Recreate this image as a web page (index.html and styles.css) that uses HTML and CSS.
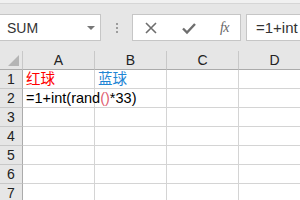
FILE: index.html
```html
<!DOCTYPE html>
<html>
<head>
<meta charset="utf-8">
<link rel="stylesheet" href="styles.css">
</head>
<body>
<div class="top-edge"></div>
<div class="fbar">
  <div class="namebox">
    <span class="nb-text">SUM</span>
    <span class="nb-arrow"></span>
  </div>
  <div class="sep"><span class="dot"></span><span class="dot"></span><span class="dot"></span></div>
  <div class="btns">
    <svg class="ico" width="14" height="14" viewBox="0 0 14 14"><path d="M2 2 L12 12 M12 2 L2 12" stroke="#6e6e6e" stroke-width="1.6" fill="none"/></svg>
    <svg class="ico" width="16" height="14" viewBox="0 0 16 14"><path d="M2 7.5 L6 11.5 L14 3" stroke="#6e6e6e" stroke-width="2.4" fill="none"/></svg>
    <span class="fx">fx</span>
  </div>
  <div class="finput">=1+int</div>
</div>
<div class="sheet">
  <div class="corner"><span class="tri"></span></div>
  <div class="ch">A</div><div class="ch">B</div><div class="ch">C</div><div class="ch">D</div>

  <div class="rh">1</div>
  <div class="cell red">红球</div><div class="cell blue">蓝球</div><div class="cell"></div><div class="cell"></div>

  <div class="rh">2</div>
  <div class="cell over">=1+int(rand<span class="p1">(</span><span class="p2">)</span>*33)</div><div class="cell"></div><div class="cell"></div><div class="cell"></div>

  <div class="rh">3</div>
  <div class="cell"></div><div class="cell"></div><div class="cell"></div><div class="cell"></div>
  <div class="rh">4</div>
  <div class="cell"></div><div class="cell"></div><div class="cell"></div><div class="cell"></div>
  <div class="rh">5</div>
  <div class="cell"></div><div class="cell"></div><div class="cell"></div><div class="cell"></div>
  <div class="rh">6</div>
  <div class="cell"></div><div class="cell"></div><div class="cell"></div><div class="cell"></div>
  <div class="rh">7</div>
  <div class="cell"></div><div class="cell"></div><div class="cell"></div><div class="cell"></div>
</div>
</body>
</html>
```

FILE: styles.css
```css
html, body {
  margin: 0;
  padding: 0;
  width: 300px;
  height: 200px;
  overflow: hidden;
  background: #e6e6e6;
  font-family: "Liberation Sans", "Noto Sans CJK SC", sans-serif;
}
.top-edge {
  height: 3px;
  background: #f1f1f1;
  border-bottom: 1px solid #d6d6d6;
}
.fbar {
  display: flex;
  align-items: stretch;
  height: 27px;
  padding: 10px 0;
  background: #e6e6e6;
}
.namebox {
  box-sizing: border-box;
  width: 101px;
  background: #fff;
  border: 1px solid #c6c6c6;
  border-left: none;
  display: flex;
  align-items: center;
  justify-content: space-between;
  padding: 0 5px 0 7px;
}
.nb-text {
  font-size: 14px;
  color: #333;
}
.nb-arrow {
  width: 0;
  height: 0;
  border-left: 4px solid transparent;
  border-right: 4px solid transparent;
  border-top: 4px solid #777;
  margin-top: 1px;
}
.sep {
  width: 31px;
  display: flex;
  flex-direction: column;
  align-items: center;
  justify-content: center;
  gap: 2px;
}
.dot {
  width: 2px;
  height: 2px;
  background: #9c9c9c;
}
.btns {
  box-sizing: border-box;
  width: 109px;
  background: #fff;
  border: 1px solid #c6c6c6;
  display: flex;
  align-items: center;
  justify-content: space-between;
  padding: 0 11px 0 11px;
}
.fx {
  font-family: "Liberation Serif", serif;
  font-style: italic;
  font-size: 14px;
  color: #666;
  letter-spacing: -0.5px;
}
.finput {
  box-sizing: border-box;
  flex: 1;
  margin-left: 5px;
  background: #fff;
  border: 1px solid #c6c6c6;
  border-right: none;
  font-size: 15px;
  color: #333;
  padding: 4px 0 0 9px;
  white-space: nowrap;
  overflow: hidden;
}
.sheet {
  display: grid;
  grid-template-columns: 23px repeat(4, 72px);
  grid-template-rows: 19px repeat(7, 19px);
  background: #fff;
}
.corner {
  background: #e6e6e6;
  border-right: 1px solid #c8c8c8;
  border-bottom: 1px solid #ababab;
  position: relative;
}
.tri {
  position: absolute;
  right: 3px;
  bottom: 3px;
  width: 0;
  height: 0;
  border-left: 11px solid transparent;
  border-bottom: 11px solid #b5b5b5;
}
.ch {
  background: #e6e6e6;
  border-right: 1px solid #c8c8c8;
  border-bottom: 1px solid #ababab;
  text-align: center;
  font-size: 14px;
  line-height: 18px;
  color: #222;
}
.rh {
  background: #e6e6e6;
  border-right: 1px solid #ababab;
  border-bottom: 1px solid #c8c8c8;
  text-align: center;
  font-size: 14px;
  line-height: 19px;
  color: #222;
}
.cell {
  border-right: 1px solid #d4d4d4;
  border-bottom: 1px solid #d4d4d4;
  font-size: 14.5px;
  line-height: 19px;
  padding-left: 3px;
  white-space: nowrap;
  color: #000;
}
.over {
  overflow: visible;
  position: relative;
  z-index: 1;
}
.red { color: #ff0000; }
.blue { color: #1f86d4; }
.p1, .p2 { color: #e06070; }
```
